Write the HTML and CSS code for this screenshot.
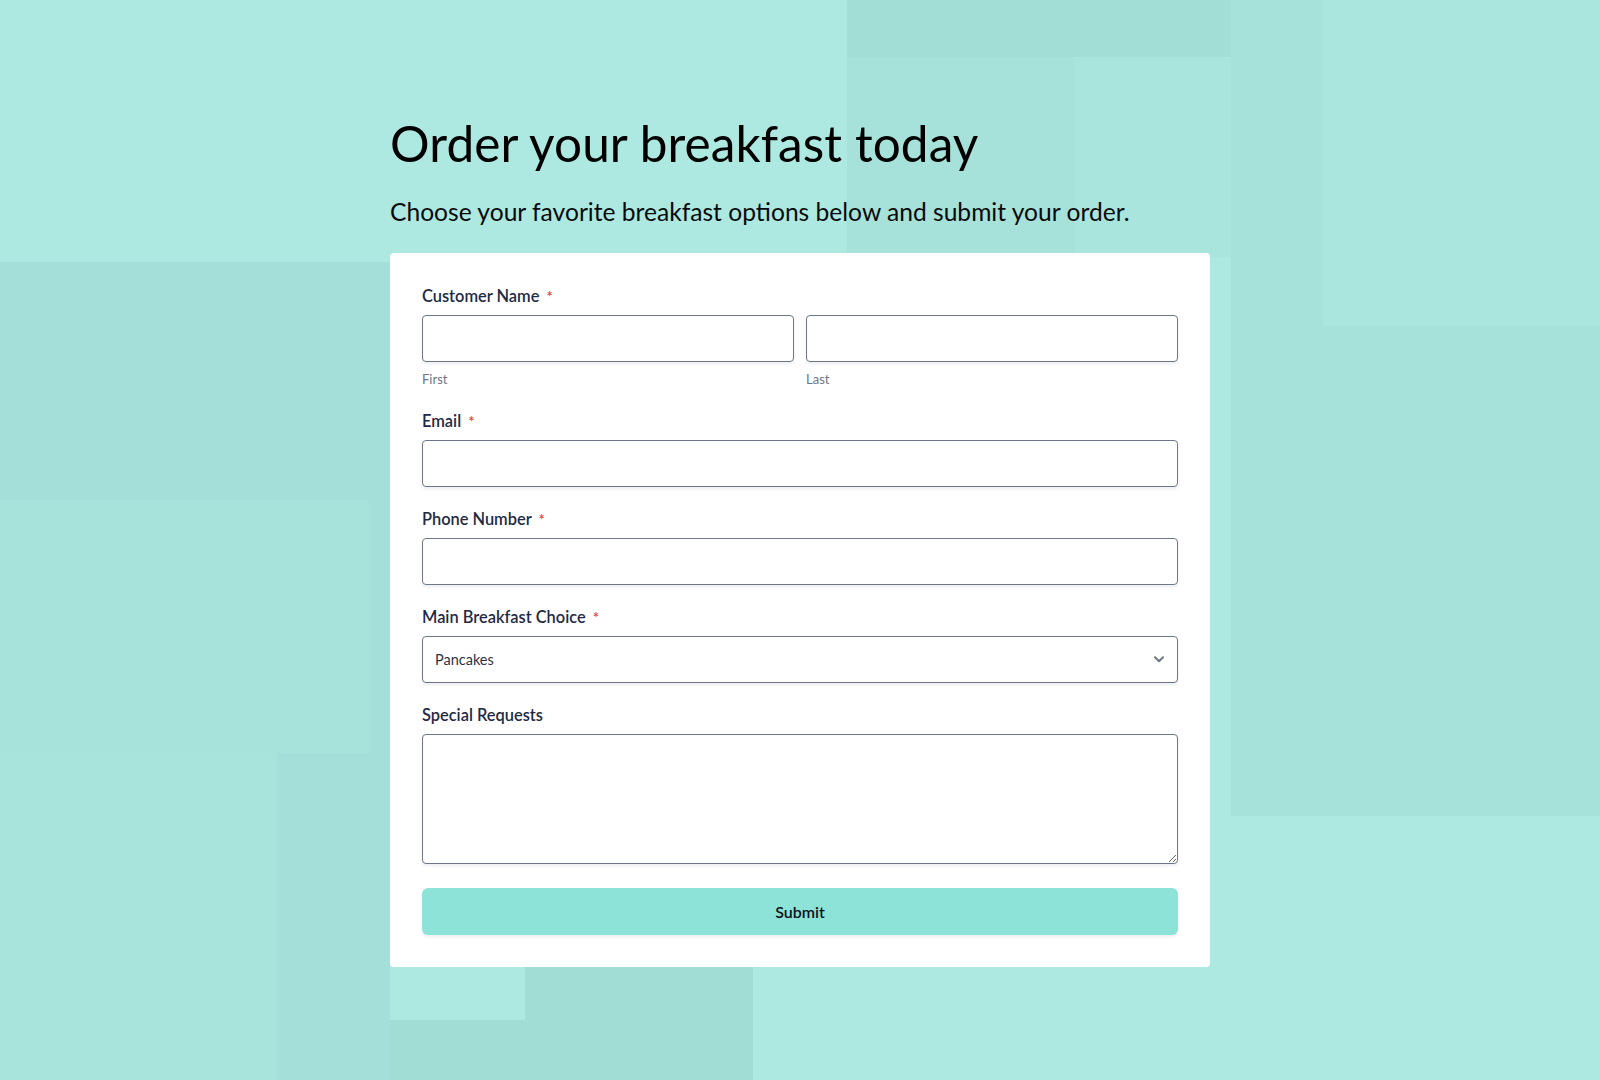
FILE: index.html
```html
<!DOCTYPE html>
<html lang="en">
<head>
<meta charset="utf-8">
<title>Order your breakfast today</title>
<link rel="stylesheet" href="styles.css">
</head>
<body>
<main class="page">
  <div class="wrap">
    <h1 class="title">Order your breakfast today</h1>
    <p class="subtitle">Choose your favorite breakfast options below and submit your order.</p>
    <form class="card">
      <div class="field field-name">
        <label class="label">Customer Name <span class="req">*</span></label>
        <div class="name-row">
          <div class="name-col">
            <input class="input" type="text">
            <span class="sublabel">First</span>
          </div>
          <div class="name-col">
            <input class="input" type="text">
            <span class="sublabel">Last</span>
          </div>
        </div>
      </div>
      <div class="field">
        <label class="label">Email <span class="req">*</span></label>
        <input class="input" type="email">
      </div>
      <div class="field">
        <label class="label">Phone Number <span class="req">*</span></label>
        <input class="input" type="tel">
      </div>
      <div class="field">
        <label class="label">Main Breakfast Choice <span class="req">*</span></label>
        <div class="select-wrap">
          <select class="input select">
            <option>Pancakes</option>
            <option>Waffles</option>
            <option>Omelette</option>
          </select>
          <svg class="chevron" width="10" height="7" viewBox="0 0 10 7"><path d="M1 1.2 5 5.2l4-4" fill="none" stroke="#6f7685" stroke-width="2" stroke-linecap="round" stroke-linejoin="round"/></svg>
        </div>
      </div>
      <div class="field field-last">
        <label class="label">Special Requests</label>
        <textarea class="input textarea"></textarea>
      </div>
      <button class="submit" type="button">Submit</button>
    </form>
  </div>
</main>
</body>
</html>
```

FILE: styles.css
```css
html, body {
  margin: 0;
  padding: 0;
}
body {
  font-family: Lato, "Noto Sans", "Liberation Sans", sans-serif;
  background-color: #ade8e1;
}
.page {
  min-height: 1080px;
  box-sizing: border-box;
  padding-top: 114px;
  background-color: #ade8e1;
  background-repeat: no-repeat;
  background-image:
    linear-gradient(#a2ddd6, #a2ddd6),
    linear-gradient(#a6e1da, #a6e1da),
    linear-gradient(#a9e4dd, #a9e4dd),
    linear-gradient(#aae5de, #aae5de),
    linear-gradient(#a6e1da, #a6e1da),
    linear-gradient(#a7e2db, #a7e2db),
    linear-gradient(#a8e3dc, #a8e3dc),
    linear-gradient(#a4e0d9, #a4e0d9),
    linear-gradient(#a1dcd5, #a1dcd5),
    linear-gradient(#a1dcd5, #a1dcd5);
  background-size:
    384px 57px,
    228px 200px,
    156px 200px,
    277px 326px,
    369px 816px,
    369px 253px,
    277px 327px,
    390px 818px,
    384px 60px,
    228px 54px;
  background-position:
    847px 0,
    847px 57px,
    1075px 57px,
    1323px 0,
    1231px 0,
    0 500px,
    0 753px,
    0 262px,
    369px 1020px,
    525px 966px;
}
.wrap {
  width: 820px;
  margin: 0 auto;
}
.title {
  margin: 0;
  font-size: 49.5px;
  line-height: 58px;
  font-weight: 400;
  color: #000;
  letter-spacing: 0.1px;
}
.subtitle {
  margin: 23px 0 0;
  font-size: 24.6px;
  line-height: 34px;
  font-weight: 400;
  color: #0b0b0b;
}
.card {
  margin-top: 24px;
  background: #fff;
  border-radius: 4px;
  padding: 33px 32px 32px;
  display: flex;
  flex-direction: column;
}
.field {
  display: flex;
  flex-direction: column;
  margin-bottom: 22px;
}
.field-name {
  margin-bottom: 24px;
}
.field-last {
  margin-bottom: 24px;
}
.label {
  font-size: 16.4px;
  line-height: 20px;
  height: 20px;
  font-weight: 600;
  color: #1f2a44;
  margin-bottom: 9px;
}
.req {
  color: #e8402f;
  font-size: 15px;
  line-height: 1;
  margin-left: 3px;
}
.name-row {
  display: flex;
  gap: 12px;
}
.name-col {
  flex: 1;
  display: flex;
  flex-direction: column;
}
.sublabel {
  margin-top: 9px;
  font-size: 13px;
  line-height: 16px;
  color: #6f7685;
}
.input {
  box-sizing: border-box;
  width: 100%;
  height: 47px;
  border: 1px solid #6f7685;
  border-radius: 4px;
  background: #fff;
  font-family: inherit;
  font-size: 14.5px;
  color: #2c3345;
  padding: 0 12px;
  margin: 0;
  box-shadow: 0 2px 3px rgba(219, 222, 228, 0.5);
  outline: none;
}
.select-wrap {
  position: relative;
}
.select {
  appearance: none;
  -webkit-appearance: none;
}
.chevron {
  position: absolute;
  right: 14px;
  top: 20px;
  pointer-events: none;
}
.textarea {
  height: 130px;
  padding: 10px 12px;
  resize: vertical;
  display: block;
}
.submit {
  height: 47px;
  width: 100%;
  border: none;
  border-radius: 6px;
  background: #8ee3d8;
  font-family: inherit;
  font-size: 16px;
  font-weight: 600;
  color: #0b1220;
  box-shadow: 0 2px 3px rgba(219, 222, 228, 0.5);
  cursor: pointer;
}
```
